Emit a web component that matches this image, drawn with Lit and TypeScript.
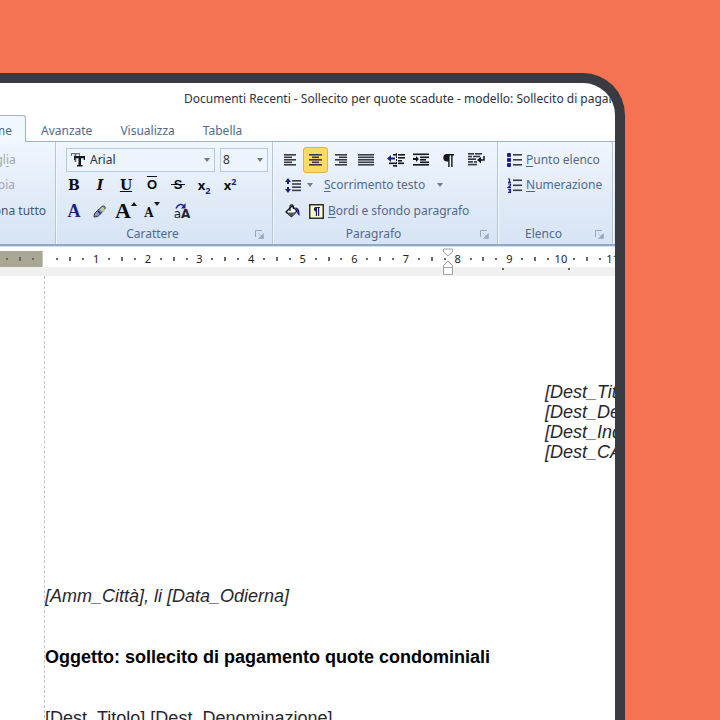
import { LitElement, html, svg, css } from "lit";
import { customElement, property } from "lit/decorators.js";
import { classMap } from "lit/directives/class-map.js";

const lines = (rows: number[][], color = "#3a3e46") =>
  rows.map(([x, y, w]) => svg`<rect x=${x} y=${y} width=${w} height="1.6" fill=${color} />`);

const icon = (width: number, height: number, body: unknown) =>
  html`<svg width=${width} height=${height} viewBox="0 0 ${width} ${height}" aria-hidden="true">${body}</svg>`;

const icons = {
  left: icon(13, 12, lines([[0, 0, 12], [0, 2.5, 8], [0, 5, 12], [0, 7.5, 8], [0, 10, 12]])),
  center: icon(13, 12, lines([[0, 0, 13], [3, 2.5, 7], [0, 5, 13], [3, 7.5, 7], [0, 10, 13]])),
  right: icon(13, 12, lines([[1, 0, 12], [5, 2.5, 8], [1, 5, 12], [5, 7.5, 8], [1, 10, 12]])),
  justify: icon(16, 12, lines([0, 2.5, 5, 7.5, 10].map((y) => [0, y, 16]))),
  outdent: icon(18, 14, svg`
    ${lines([[6, 1, 4], [11, 1, 7], [11, 4, 7], [11, 7, 4], [2, 9.5, 8], [11, 9.5, 6], [6, 12, 4]], "#15171c")}
    <path d="M9.5 0v14" stroke="#15171c" stroke-dasharray="2 1" />
    <path d="M0 5.5 4 2v2.5h4v2H4V9z" fill="#1d1d8c" />`),
  indent: icon(16, 14, svg`
    ${lines([[0, 0.5, 16], [7, 3.5, 9], [7, 6, 6], [7, 8.5, 9], [0, 11, 16]], "#15171c")}
    <path d="M6 6 3 3v2H0v2h3v2z" fill="#15171c" />`),
  pilcrow: icon(12, 13, svg`<path d="M5 0h7v1.4h-1.4V13H9.2V1.4H7.6V13H6.2V7.4H5A3.7 3.7 0 0 1 5 0z" fill="#15171c" />`),
  flow: icon(17, 14, svg`
    ${lines([[0, 0, 6], [7, 0, 7], [0, 2.7, 4], [5, 2.7, 7], [0, 5.4, 8], [0, 8.1, 5], [6, 8.1, 3], [0, 10.8, 9]], "#33373f")}
    <path d="M16 3v4h-4" fill="none" stroke="#15171c" stroke-width="1.5" /><path d="M9 7l4-3.2v6.4z" fill="#15171c" />`),
  spacing: icon(16, 15, svg`
    <path d="M3 0 6 4H4v2H2V4H0zM3 15 0 11h2V9h2v2h2z" fill="#1d1d8c" />
    ${lines([[7, 2, 9], [7, 5.2, 9], [7, 8.4, 9], [7, 11.6, 9]])}`),
  bucket: icon(15, 14, svg`
    <path d="M1 8 7 2l5 5-5.5 5.5z" fill="#fff" stroke="#15171c" stroke-width="1.3" />
    <path d="M2 8.500h9.500L6.500 12.500z" fill="#555b66" />
    <path d="M5 7V2.500a1.700 1.700 0 0 1 3.400 0V5" fill="none" stroke="#15171c" stroke-width="1.2" />
    <path d="M10 3.500c3 0 5 2 4.500 8.500l-2.300-2.500L12.500 7z" fill="#1d1d8c" />`),
  box: icon(15, 15, svg`
    <rect x=".75" y=".75" width="13.5" height="13.5" fill="#fffbc4" stroke="#2b2f36" stroke-width="1.5" />
    <path d="M6.500 3H11v1h-.8v8H9V4H8v8H6.800V7.500A2.300 2.300 0 0 1 6.500 3z" fill="#1d1d6c" />`),
  bullets: icon(15, 14, svg`
    ${[0, 5, 10].map((y) => svg`<rect x="0" y=${y} width="4" height="4" rx="1" fill="#1d1d8c" />`)}
    ${lines([[6, 1, 9], [6, 6, 9], [6, 11, 9]])}`),
  numbers: icon(15, 15, svg`
    <path d="M1 1h1.500v3M1 4.300h3M1 6h2.500v1.600L1 9.500h3M1 11.300h2.500v3H1M2 12.800h1.500" fill="none" stroke="#1d1d8c" stroke-width="1.2" />
    ${lines([[6, 1.5, 9], [6, 6.5, 9], [6, 11.5, 9]])}`),
  pen: icon(14, 13, svg`
    <path d="M1 12c0-3 1-4 2-5l6-5.500c2-1.500 4 .5 3 2.500L6.500 10C5 11.500 3 12 1 12z" fill="#8f98b8" stroke="#2b2f36" />
    <path d="M7 4l3 3 2-2.500L9.500 2z" fill="#c8cf8a" /><path d="M5 6l2.500 2.500" stroke="#1d1d8c" stroke-width="1.5" />`),
  change: icon(16, 6, svg`<path d="M2 5.500C4 .8 8 .5 10 3" fill="none" stroke="#1d1d8c" stroke-width="1.4" /><path d="M11.500 0v5.500H7z" fill="#1d1d8c" />`),
  launcher: icon(9, 9, svg`<path d="M.5 7V.5H7" fill="none" stroke="#9aa7ba" /><path d="M3 3l3 3M8.500 3.500v5h-5z" fill="#9aa7ba" stroke="#9aa7ba" stroke-width=".6" />`),
  arrow: icon(6, 4, svg`<path d="M0 0h6L3 4z" fill="#6e7a8c" />`),
  up: icon(6, 4, svg`<path d="M3 0 6 4H0z" fill="#15171c" />`),
  down: icon(6, 4, svg`<path d="M0 0h6L3 4z" fill="#15171c" />`),
  fontMark: icon(14, 14, svg`
    <path d="M0 0h9v3H8V1.300H5.300V9H3.600V1.300H1V3H0z" fill="#6d7380" />
    <path d="M3 3h11v4h-1.300V5.200H10V12h1.500v1.500h-5.500V12H7.500V5.200H4.300V7H3z" fill="#15171c" />`),
  cut: icon(16, 14, svg`<path d="M4 1l6 9M10 1 4 10" stroke="#9aa3b0" />`),
  copy: icon(16, 14, svg`<path d="M3 1h7v9H3zM6 4h7v9H6z" fill="none" stroke="#9aa3b0" />`),
  marker: icon(10, 27, svg`
    <path d="M.5 1h9v3L5 8 .5 4z" fill="#fff" stroke="#a3a3a3" />
    <path d="M.5 26.500v-9L5 13l4.500 4.500v9zM.5 19.500h9" fill="#fff" stroke="#a3a3a3" />`),
};

@customElement("ribbon-group")
class RibbonGroup extends LitElement {
  @property() label = "";
  static styles = css`
    :host {
      box-sizing: border-box;
      flex: none;
      display: grid;
      grid-template-rows: 76px 20px;
      padding-top: 6px;
      border-right: 1px solid #b4c6dc;
      box-shadow: 1px 0 #f4f9ff;
    }
    .caption {
      display: flex;
      align-items: center;
      padding-right: 8px;
      color: #54698a;
    }
    .name { flex: 1; text-align: center; padding-right: 6px; }
    button { display: flex; border: 0; padding: 0; background: none; }
  `;
  render() {
    return html`
      <slot></slot>
      ${this.label
        ? html`<div class="caption">
            <span class="name">${this.label}</span>
            <button aria-label=${`Opzioni ${this.label}`}>${icons.launcher}</button>
          </div>`
        : ""}`;
  }
}

@customElement("ruler-bar")
class RulerBar extends LitElement {
  static styles = css`
    :host { display: block; background: #f0f0f0; height: 25px; overflow: hidden; margin-top: 4px; padding-left: 40px; }
    .scale { display: flex; height: 16px; background: #fff; }
    .margin { flex: none; box-sizing: border-box; width: 43px; background: #aaa695; display: grid; grid-template-columns: repeat(3, 13px); border-right: 1px solid #c9c6ba; }
    .units { flex: none; margin-left: 8px; width: 568px; display: grid; grid-template-columns: repeat(44, 1fr); }
    .cell { display: flex; width: 0; justify-self: center; align-items: center; justify-content: center; font: 11px/16px "Noto Sans", sans-serif; color: #222; }
    .dot, .half { flex: none; width: 2px; height: 2px; background: #6b6862; }
    .half { height: 4px; }
    .tabs { display: flex; gap: 64px; padding: 1px 0 0 502px; }
  `;
  render() {
    const dot = (k: number) => html`<i class=${k % 4 === 2 ? "half" : "dot"}></i>`;
    return html`
      <div class="scale">
        <div class="margin">${[1, 2, 3].map((k) => html`<span class="cell">${dot(k)}</span>`)}</div>
        <div class="units">
          ${Array.from({ length: 44 }, (_, i) => i + 1).map(
            (k) => html`<span class="cell">${k % 4 ? dot(k) : k / 4}</span>`
          )}
        </div>
      </div>
      <div class="tabs"><i class="dot"></i><i class="dot"></i></div>`;
  }
}

@customElement("app-root")
class AppRoot extends LitElement {
  static styles = css`
    :host {
      display: flex;
      box-sizing: border-box;
      height: 100vh;
      overflow: hidden;
      padding: 73px 95px 0 0;
      background: #f57253;
      font: 12px/16px "Noto Sans", sans-serif;
      color: #2c3340;
    }
    .device {
      flex: 1;
      min-width: 0;
      box-sizing: border-box;
      margin-left: -40px;
      border: solid #3a3b40;
      border-width: 10px 10px 0 0;
      border-radius: 0 42px 0 0;
      background: #fff;
      overflow: hidden;
    }
    .title { height: 32px; line-height: 32px; padding-left: 224px; white-space: nowrap; overflow: hidden; }
    .tabs { display: flex; height: 27px; box-sizing: border-box; border-bottom: 1px solid #9fb2c9; }
    .tab {
      box-sizing: border-box;
      height: 27px;
      border: 1px solid transparent;
      border-bottom: 0;
      padding: 3px 13px 0;
      background: none;
      font: inherit;
      color: #54698a;
    }
    .tab.active { width: 66px; margin-right: 1px; border-color: #9fb2c9; border-radius: 0 3px 0 0; background: #f1f7fe; padding: 3px 13px 0 0; text-align: right; }
    .ribbon {
      display: flex;
      height: 102px;
      background: linear-gradient(#f0f6fe, #e2ecf8 50%, #d7e4f4);
      border-bottom: 2px solid #8fa9c8;
      color: #54698a;
      white-space: nowrap;
      overflow: hidden;
    }
    .clip { width: 96px; }
    .font { width: 217px; }
    .para { width: 225px; }
    .list { width: 115px; }
    .rows { display: grid; grid-template-rows: 24px 26px 26px; }
    .row { display: flex; align-items: center; }
    .row.start { padding-left: 5px; }
    .row button {
      box-sizing: border-box;
      flex: none;
      display: flex;
      align-items: center;
      justify-content: center;
      gap: 4px;
      height: 26px;
      border: 1px solid transparent;
      padding: 0;
      background: none;
      font: inherit;
      color: inherit;
    }
    .row .tool { width: 26px; }
    .row .align { width: 25px; }
    .row .wide { width: 29px; }
    .row .case { width: 34px; }
    .row .on { background: #ffdb62; border-color: #e0b04c; border-radius: 3px; }
    .row .text { padding: 0 0 0 8px; }
    .row .plain { padding-left: 1px; }
    .row .off { color: #a0a8b4; padding-left: 2px; }
    .row .dark { color: #435672; padding-left: 1px; }
    .apart { margin-left: 5px; }
    .glyph { font: bold 14px/16px "DejaVu Serif", serif; color: #0c0d10; }
    .italic { font-style: italic; }
    .under { text-decoration: underline; }
    .over { font: bold 13px/16px "Liberation Sans", sans-serif; text-decoration: overline; }
    .strike { font: bold 13px/16px "Liberation Sans", sans-serif; text-decoration: line-through; }
    .small { font: bold 13px/16px "Noto Sans", sans-serif; }
    .small sub, .small sup { font-size: 9px; line-height: 0; color: #1d1d8c; }
    .blue { color: #1d1d8c; font: bold 18px/18px "Liberation Serif", serif; }
    .big { font: bold 22px/22px "Liberation Serif", serif; }
    .tiny { font-size: 12px; padding-top: 4px; }
    .mark { align-self: flex-start; display: flex; padding-top: 3px; }
    .row .stack { gap: 0; }
    .case-body { display: flex; flex-direction: column; align-items: center; }
    .letters { font: 12px/10px "DejaVu Sans", sans-serif; color: #22252c; }
    .combos { display: flex; gap: 5px; padding-left: 10px; }
    .combo { box-sizing: border-box; display: flex; align-items: center; width: 149px; height: 24px; border: 1px solid #b5c9e2; background: #edf4fc; padding-left: 4px; }
    .combo.size { width: 48px; padding-left: 0; }
    .combo select { flex: 1; min-width: 0; appearance: none; border: 0; background: none; font: inherit; color: #2c3340; padding: 0 0 0 5px; height: 22px; outline: 0; }
    .combo.size select { padding-left: 2px; }
    .combo svg { flex: none; }
    .drop { display: flex; padding-right: 4px; }
    .lone { display: flex; padding-right: 2px; }
    .drop-gap { display: flex; padding-left: 8px; }
    u { text-underline-offset: 2px; }
    .ruler-wrap { position: relative; border-top: 1px solid #d6e1ee; }
    .handle { position: absolute; left: 483px; top: 1px; display: flex; }
    .page { margin-left: 84px; border-left: 1px dashed #c4c4c4; font: 18px/20px "Liberation Sans", sans-serif; color: #26272b; white-space: nowrap; overflow: hidden; }
    .page p { margin: 0; }
    .page .address { font-style: italic; padding: 106px 0 0 500px; }
    .page .date { font-style: italic; padding-top: 124px; }
    .page .subject { font-weight: bold; padding-top: 41px; color: #000; }
    .page .body { padding-top: 41px; }
  `;

  render() {
    const tool = (label: string, body: unknown, extra = {}) =>
      html`<button class=${classMap({ tool: true, ...extra })} aria-label=${label}>${body}</button>`;
    const letter = (text: unknown, style: string) => html`<span class="glyph ${style}">${text}</span>`;
    return html`
      <main class="device">
        <div class="title">Documenti Recenti - Sollecito per quote scadute - modello: Sollecito di pagamento</div>
        <nav class="tabs">
          <button class="tab active">Home</button>
          <button class="tab">Avanzate</button>
          <button class="tab">Visualizza</button>
          <button class="tab">Tabella</button>
        </nav>
        <div class="ribbon">
          <ribbon-group class="clip">
            <div class="rows">
              <div class="row"><button class="off">${icons.cut}<span>Tagl<u>i</u>a</span></button></div>
              <div class="row"><button class="off">${icons.copy}<span>Copia</span></button></div>
              <div class="row"><button class="dark">Seleziona tutto</button></div>
            </div>
          </ribbon-group>
          <ribbon-group class="font" label="Carattere">
            <div class="rows">
              <div class="combos">
                <label class="combo">
                  ${icons.fontMark}
                  <select aria-label="Tipo di carattere"><option>Arial</option></select>
                  <span class="drop">${icons.arrow}</span>
                </label>
                <label class="combo size">
                  <select aria-label="Dimensione"><option>8</option></select>
                  <span class="drop">${icons.arrow}</span>
                </label>
              </div>
              <div class="row start">
                ${tool("Grassetto", letter("B", ""))}
                ${tool("Corsivo", letter("I", "italic"))}
                ${tool("Sottolineato", letter("U", "under"))}
                ${tool("Sopralineato", letter("O", "over"))}
                ${tool("Barrato", letter(html`&thinsp;S&thinsp;`, "strike"))}
                ${tool("Pedice", letter(html`x<sub>2</sub>`, "small"))}
                ${tool("Apice", letter(html`x<sup>2</sup>`, "small"))}
              </div>
              <div class="row start">
                ${tool("Colore", letter("A", "blue"))}
                ${tool("Evidenziatore", icons.pen)}
                ${tool("Ingrandisci", html`${letter("A", "big")}<span class="mark">${icons.up}</span>`, { stack: true })}
                ${tool("Riduci", html`${letter("A", "tiny")}<span class="mark">${icons.down}</span>`, { stack: true })}
                ${tool("Maiuscole", html`<span class="case-body">${icons.change}<span class="letters">a<b>A</b></span></span>`, { case: true })}
              </div>
            </div>
          </ribbon-group>
          <ribbon-group class="para" label="Paragrafo">
            <div class="rows">
              <div class="row start">
                ${tool("Allinea a sinistra", icons.left, { align: true })}
                ${tool("Centra", icons.center, { align: true, on: true })}
                ${tool("Allinea a destra", icons.right, { align: true })}
                ${tool("Giustifica", icons.justify, { align: true })}
                ${tool("Riduci rientro", icons.outdent, { align: true, apart: true })}
                ${tool("Aumenta rientro", icons.indent, { align: true })}
                ${tool("Segni di paragrafo", icons.pilcrow, { wide: true })}
                ${tool("Direzione testo", icons.flow, { wide: true })}
              </div>
              <div class="row start">
                ${tool("Interlinea", icons.spacing, { wide: true })}
                <span class="lone">${icons.arrow}</span>
                <button class="text"><span><u>S</u>corrimento testo</span><span class="drop-gap">${icons.arrow}</span></button>
              </div>
              <div class="row start">
                ${tool("Sfondo", icons.bucket, { wide: true })}
                <button class="plain">${icons.box}<span><u>B</u>ordi e sfondo paragrafo</span></button>
              </div>
            </div>
          </ribbon-group>
          <ribbon-group class="list" label="Elenco">
            <div class="rows">
              <div class="row"><button class="text">${icons.bullets}<span><u>P</u>unto elenco</span></button></div>
              <div class="row"><button class="text">${icons.numbers}<span><u>N</u>umerazione</span></button></div>
            </div>
          </ribbon-group>
        </div>
        <div class="ruler-wrap">
          <ruler-bar></ruler-bar>
          <span class="handle">${icons.marker}</span>
        </div>
        <article class="page">
          <div class="address">
            <p>[Dest_Titolo]</p>
            <p>[Dest_Denominazione]</p>
            <p>[Dest_Indirizzo]</p>
            <p>[Dest_CAP]</p>
          </div>
          <p class="date">[Amm_Città], li [Data_Odierna]</p>
          <p class="subject">Oggetto: sollecito di pagamento quote condominiali</p>
          <p class="body">[Dest_Titolo] [Dest_Denominazione]</p>
        </article>
      </main>`;
  }
}
